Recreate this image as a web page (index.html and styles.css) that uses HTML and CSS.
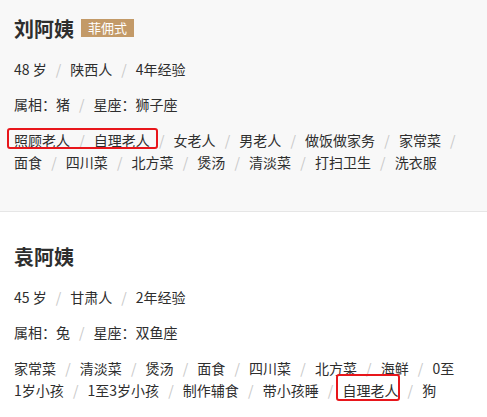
FILE: index.html
```html
<!DOCTYPE html>
<html lang="zh-CN">
<head>
  <meta charset="UTF-8" />
  <meta name="viewport" content="width=device-width, initial-scale=1.0"/>
  <title>阿姨列表</title>
  <link rel="stylesheet" href="styles.css">
</head>
<body>

  <div class="card card-grey">
    <div class="name-row">
      <h3 class="name">刘阿姨</h3>
      <span class="badge">菲佣式</span>
    </div>
    <div class="info">
      <span>48 岁</span><span class="sep">/</span><span>陕西人</span><span class="sep">/</span><span>4年经验</span>
    </div>
    <div class="info info-attr">
      <span>属相：猪</span><span class="sep">/</span><span>星座：狮子座</span>
    </div>
    <p class="tags"><span class="hl hl-a">照顾老人 <i>/</i> 自理老人</span> <i>/</i> 女老人 <i>/</i> 男老人 <i>/</i> 做饭做家务 <i>/</i> 家常菜 <i>/</i> 面食 <i>/</i> 四川菜 <i>/</i> 北方菜 <i>/</i> 煲汤 <i>/</i> 清淡菜 <i>/</i> 打扫卫生 <i>/</i> 洗衣服</p>
  </div>

  <div class="card card-white">
    <div class="name-row">
      <h3 class="name">袁阿姨</h3>
    </div>
    <div class="info">
      <span>45 岁</span><span class="sep">/</span><span>甘肃人</span><span class="sep">/</span><span>2年经验</span>
    </div>
    <div class="info info-attr">
      <span>属相：兔</span><span class="sep">/</span><span>星座：双鱼座</span>
    </div>
    <p class="tags">家常菜 <i>/</i> 清淡菜 <i>/</i> 煲汤 <i>/</i> 面食 <i>/</i> 四川菜 <i>/</i> 北方菜 <i>/</i> 海鲜 <i>/</i> 0至1岁小孩 <i>/</i> 1至3岁小孩 <i>/</i> 制作辅食 <i>/</i> 带小孩睡 <i>/</i> <span class="hl hl-b">自理老人</span> <i>/</i> 狗</p>
  </div>

</body>
</html>
```

FILE: styles.css
```css
body {
  margin: 0;
  font-family: "Noto Sans CJK SC", "Noto Sans", sans-serif;
  background: #fff;
  color: #2e2e2e;
  font-size: 14px;
}
.card {
  padding: 15px 27px 38px 14px;
}
.card-grey {
  background: #f8f8f8;
  border-bottom: 1px solid #e6e6e6;
}
.card-white {
  padding-top: 31px;
  padding-bottom: 10px;
}
.name-row {
  display: flex;
  align-items: center;
  height: 28px;
}
.name {
  margin: 0;
  font-size: 20px;
  font-weight: bold;
  line-height: 28px;
}
.badge {
  margin-left: 7px;
  margin-top: -2px;
  background: #c39a68;
  color: #fff;
  font-size: 13px;
  line-height: 18px;
  padding: 0 7px;
}
.info {
  margin-top: 15px;
  line-height: 22px;
}
.info-attr {
  margin-top: 13px;
}
.sep {
  color: #c8c8c8;
  margin: 0 9px;
}
.tags {
  margin: 14px 0 0;
  line-height: 22px;
  word-spacing: 6px;
}
.tags i {
  font-style: normal;
  color: #c8c8c8;
}
.hl {
  position: relative;
}
.hl::after {
  content: '';
  position: absolute;
  border: 2px solid #e8161b;
  border-radius: 3px;
}
.hl-a::after {
  top: -2px;
  bottom: 1px;
  left: -7px;
  right: -8px;
}
.hl-b::after {
  top: -6px;
  bottom: -1px;
  left: -6px;
  right: -2px;
}
```
